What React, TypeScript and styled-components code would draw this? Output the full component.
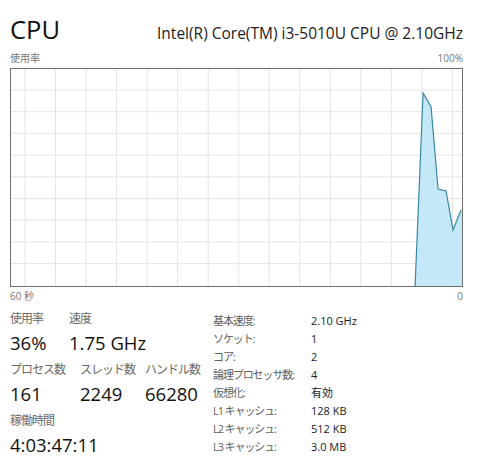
import styled, { createGlobalStyle } from 'styled-components';

const GlobalStyle = createGlobalStyle`
  html, body {
    margin: 0;
    padding: 0;
    background: #ffffff;
  }
  body {
    font-family: "Open Sans", "Noto Sans CJK JP", sans-serif;
    color: #1a1a1a;
  }
`;

const FONT = `"Open Sans", "Noto Sans CJK JP", sans-serif`;

const Page = styled.div`
  width: 479px;
  height: 470px;
  box-sizing: border-box;
  padding: 12px 16px 0 10px;
  font-family: ${FONT};
  overflow: hidden;
`;

const Header = styled.div`
  display: flex;
  justify-content: space-between;
  align-items: baseline;
  height: 34px;
  line-height: 34px;
`;

const Title = styled.div`
  font-size: 25.5px;
  color: #111;
`;

const Processor = styled.div`
  font-size: 15.5px;
  color: #222;
`;

const AxisRow = styled.div<{ $top: number; $bottom: number }>`
  display: flex;
  justify-content: space-between;
  font-size: 10px;
  line-height: 14px;
  color: #777;
  margin-top: ${({ $top }) => $top}px;
  margin-bottom: ${({ $bottom }) => $bottom}px;
`;

const ChartBox = styled.div`
  height: 219px;
  box-sizing: border-box;
  border: 1px solid #6e6e6e;
  svg {
    display: block;
    width: 100%;
    height: 100%;
  }
`;

const Bottom = styled.div`
  display: flex;
  margin-top: 8px;
`;

const LeftStats = styled.div`
  width: 203px;
  display: flex;
  flex-direction: column;
  gap: 5px;
`;

const StatGroup = styled.div`
  display: flex;
`;

const Stat = styled.div<{ $width?: number }>`
  width: ${({ $width }) => ($width ? `${$width}px` : 'auto')};
  display: flex;
  flex-direction: column;
`;

const StatLabel = styled.div`
  font-size: 12px;
  line-height: 16px;
  letter-spacing: -1px;
  color: #6a6a6a;
  white-space: nowrap;
`;

const StatValue = styled.div`
  font-size: 18.5px;
  line-height: 28px;
  margin-top: 2px;
  color: #111;
  white-space: nowrap;
`;

const InfoTable = styled.div`
  display: grid;
  grid-template-columns: 98px auto;
  grid-auto-rows: 18px;
  align-items: center;
  font-size: 11px;
`;

const InfoLabel = styled.div`
  color: #5e5e5e;
  font-size: 11px;
  letter-spacing: -1.1px;
  white-space: nowrap;
`;

const InfoValue = styled.div`
  color: #222;
  white-space: nowrap;
`;

const W = 452;
const H = 217;

const vLines = Array.from({ length: 15 }, (_, k) => 14 + 30.6 * k);
const hLines = Array.from({ length: 9 }, (_, k) => 21 + 21.7 * k);

const points: [number, number][] = [
  [405, 217],
  [413, 24],
  [421, 38],
  [428, 120],
  [436, 122],
  [443, 161],
  [451, 141],
];

const UsageChart = () => {
  const line = points.map(([x, y]) => `${x},${y}`).join(' ');
  const area = `${line} ${W},${points[points.length - 1][1]} ${W},${H} 405,${H}`;
  return (
    <svg viewBox={`0 0 ${W} ${H}`} preserveAspectRatio="none">
      {vLines.map((x) => (
        <line key={`v${x}`} x1={x} y1={0} x2={x} y2={H} stroke="#e4e4e4" strokeWidth={1} />
      ))}
      {hLines.map((y) => (
        <line key={`h${y}`} x1={0} y1={y} x2={W} y2={y} stroke="#e4e4e4" strokeWidth={1} />
      ))}
      <polygon points={area} fill="#c4e8f8" />
      <polyline points={line} fill="none" stroke="#3b87a4" strokeWidth={1.2} strokeLinejoin="miter" />
    </svg>
  );
};

const info: [string, string][] = [
  ['基本速度:', '2.10 GHz'],
  ['ソケット:', '1'],
  ['コア:', '2'],
  ['論理プロセッサ数:', '4'],
  ['仮想化:', '有効'],
  ['L1 キャッシュ:', '128 KB'],
  ['L2 キャッシュ:', '512 KB'],
  ['L3 キャッシュ:', '3.0 MB'],
];

export default function App() {
  return (
    <>
      <GlobalStyle />
      <Page>
        <Header>
          <Title>CPU</Title>
          <Processor>Intel(R) Core(TM) i3-5010U CPU @ 2.10GHz</Processor>
        </Header>
        <AxisRow $top={5} $bottom={3}>
          <span>使用率</span>
          <span>100%</span>
        </AxisRow>
        <ChartBox>
          <UsageChart />
        </ChartBox>
        <AxisRow $top={2} $bottom={0}>
          <span>60 秒</span>
          <span>0</span>
        </AxisRow>
        <Bottom>
          <LeftStats>
            <StatGroup>
              <Stat $width={59}>
                <StatLabel>使用率</StatLabel>
                <StatValue>36%</StatValue>
              </Stat>
              <Stat>
                <StatLabel>速度</StatLabel>
                <StatValue>1.75 GHz</StatValue>
              </Stat>
            </StatGroup>
            <StatGroup>
              <Stat $width={70}>
                <StatLabel>プロセス数</StatLabel>
                <StatValue>161</StatValue>
              </Stat>
              <Stat $width={65}>
                <StatLabel>スレッド数</StatLabel>
                <StatValue>2249</StatValue>
              </Stat>
              <Stat>
                <StatLabel>ハンドル数</StatLabel>
                <StatValue>66280</StatValue>
              </Stat>
            </StatGroup>
            <StatGroup>
              <Stat>
                <StatLabel>稼働時間</StatLabel>
                <StatValue>4:03:47:11</StatValue>
              </Stat>
            </StatGroup>
          </LeftStats>
          <InfoTable>
            {info.map(([label, value]) => (
              <>
                <InfoLabel key={`l-${label}`}>{label}</InfoLabel>
                <InfoValue key={`v-${label}`}>{value}</InfoValue>
              </>
            ))}
          </InfoTable>
        </Bottom>
      </Page>
    </>
  );
}
